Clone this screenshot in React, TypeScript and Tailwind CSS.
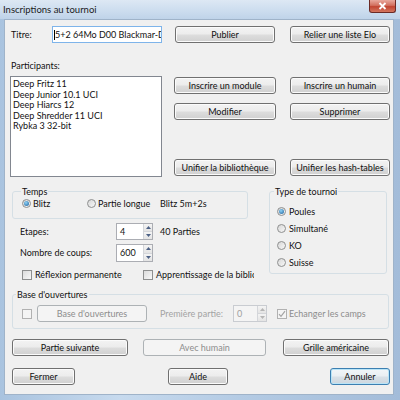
import React from "react";

const btnBase =
  "flex items-center justify-center h-[17px] rounded-[3px] border text-[9px] leading-none whitespace-nowrap shrink-0";
const btnNormal =
  "border-[#707070] text-[#111] bg-[linear-gradient(#f3f3f3_0%,#ececec_48%,#dddddd_52%,#d0d0d0_100%)] shadow-[inset_0_0_0_1px_#fbfbfb]";
const btnDisabled = "border-[#adb2b5] text-[#8d8d8d] bg-[#f4f4f4]";
const btnDefault =
  "border-[#3c7fb1] text-[#111] bg-[linear-gradient(#f2f6f9_0%,#e9eef2_48%,#d9e1e8_52%,#cdd6de_100%)] shadow-[inset_0_0_0_1px_#b9e4f7]";

function Btn({
  children,
  className = "",
  disabled = false,
  primary = false,
}: {
  children: React.ReactNode;
  className?: string;
  disabled?: boolean;
  primary?: boolean;
}) {
  const v = disabled ? btnDisabled : primary ? btnDefault : btnNormal;
  return <div className={`${btnBase} ${v} ${className}`}>{children}</div>;
}

function Radio({ checked = false }: { checked?: boolean }) {
  return (
    <span className="flex items-center justify-center w-[9px] h-[9px] rounded-full border border-[#8e8f8f] bg-[linear-gradient(135deg,#d7d7d7,#f7f7f7)] shrink-0">
      {checked && (
        <span className="w-[5px] h-[5px] rounded-full bg-[radial-gradient(circle_at_40%_35%,#8fd3f7,#1a5d9a)]" />
      )}
    </span>
  );
}

function Check({ checked = false, disabled = false }: { checked?: boolean; disabled?: boolean }) {
  return (
    <span
      className={`flex items-center justify-center w-[10px] h-[10px] border shrink-0 ${
        disabled
          ? "border-[#b1b1b1] bg-[#f4f4f4]"
          : "border-[#8e8f8f] bg-[linear-gradient(135deg,#dcdcdc,#f8f8f8)]"
      }`}
    >
      {checked && (
        <svg width="8" height="8" viewBox="0 0 8 8">
          <path d="M1 4.2 L3 6.3 L7 1.2" fill="none" stroke={disabled ? "#a3a3a3" : "#333"} strokeWidth="1.2" />
        </svg>
      )}
    </span>
  );
}

function Spin({
  value,
  className = "",
  disabled = false,
}: {
  value: string;
  className?: string;
  disabled?: boolean;
}) {
  const arrow = disabled ? "#b5b5b5" : "#4d6185";
  return (
    <div
      className={`flex shrink-0 border ${disabled ? "border-[#c9ccd1] bg-[#f4f4f4] text-[#a0a0a0]" : "border-[#abadb3] bg-white text-[#111]"} ${className}`}
    >
      <div className="flex-1 flex items-center pl-[3px] text-[9px]">{value}</div>
      <div className="flex flex-col w-[9px] border-l border-[#d4d6da]">
        <div className="flex-1 flex items-center justify-center bg-[linear-gradient(#f4f4f4,#e4e4e4)] border-b border-[#d4d6da]">
          <svg width="5" height="3" viewBox="0 0 5 3">
            <path d="M0 3 L2.5 0 L5 3Z" fill={arrow} />
          </svg>
        </div>
        <div className="flex-1 flex items-center justify-center bg-[linear-gradient(#f4f4f4,#e4e4e4)]">
          <svg width="5" height="3" viewBox="0 0 5 3">
            <path d="M0 0 L2.5 3 L5 0Z" fill={arrow} />
          </svg>
        </div>
      </div>
    </div>
  );
}

const participants = [
  "Deep Fritz 11",
  "Deep Junior 10.1 UCI",
  "Deep Hiarcs 12",
  "Deep Shredder 11 UCI",
  "Rybka 3 32-bit",
];

export default function App() {
  return (
    <div className="w-[400px] h-[400px] flex flex-col overflow-hidden bg-[linear-gradient(90deg,#a9c3df_0%,#c7daee_30%,#b4cbe4_60%,#a3bcd9_100%)] font-['Lato','Noto_Sans',sans-serif] text-[9px] text-[#111]">
      {/* barre de titre */}
      <div className="h-[19px] flex items-start shrink-0 bg-[linear-gradient(180deg,#dde8f4_0%,#cbdcee_60%,#bfd3e9_100%)]">
        <span className="ml-[3px] mt-[4px] text-[9.5px] leading-[11px] text-[#1b1b1b]">
          Inscriptions au tournoi
        </span>
        <div className="ml-auto mr-[4px] w-[27px] h-[13px] rounded-b-[3px] border border-t-0 border-[#6b2a25] bg-[linear-gradient(#e9a99d_0%,#d2705f_45%,#c24532_55%,#d3765f_100%)] flex items-center justify-center">
          <svg width="9" height="8" viewBox="0 0 9 8">
            <path d="M1.5 1 L7.5 7 M7.5 1 L1.5 7" stroke="#fff" strokeWidth="1.8" />
          </svg>
        </div>
      </div>

      {/* contenu */}
      <div className="ml-[4px] mr-[6px] mb-[5px] flex-1 bg-[#f0f0f0] border border-[#9fb3c9] flex flex-col">
        {/* titre */}
        <div className="mt-[6px] flex items-center h-[17px]">
          <span className="ml-[6px] w-[41px] shrink-0">Titre:</span>
          <div className="w-[110px] h-[17px] shrink-0 border border-[#7eb4ea] bg-white flex items-center overflow-hidden">
            <span className="w-px h-[10px] bg-black ml-[1px] shrink-0" />
            <span className="whitespace-nowrap">5+2 64Mo D00 Blackmar-Die</span>
          </div>
          <Btn className="ml-[13px] w-[100px]">Publier</Btn>
          <Btn className="ml-[15px] w-[100px]">Relier une liste Elo</Btn>
        </div>

        <div className="mt-[17px] ml-[6px] leading-[11px]">Participants:</div>

        {/* liste + boutons */}
        <div className="mt-[5px] flex">
          <div className="ml-[5px] w-[152px] h-[101px] shrink-0 border border-[#828790] bg-white pl-[2px] pt-[2px] leading-[10.5px]">
            {participants.map((p) => (
              <div key={p}>{p}</div>
            ))}
          </div>
          <div className="ml-[12px] pt-[1px] flex flex-col">
            <div className="flex gap-[14px]">
              <Btn className="w-[102px]">Inscrire un module</Btn>
              <Btn className="w-[100px]">Inscrire un humain</Btn>
            </div>
            <div className="mt-[9px] flex gap-[14px]">
              <Btn className="w-[102px]">Modifier</Btn>
              <Btn className="w-[100px]">Supprimer</Btn>
            </div>
            <div className="mt-[39px] flex gap-[14px]">
              <Btn className="w-[102px]">Unifier la bibliothèque</Btn>
              <Btn className="w-[100px]">Unifier les hash-tables</Btn>
            </div>
          </div>
        </div>

        {/* temps + type */}
        <div className="mt-[9px] flex">
          <div className="ml-[7px] w-[242px] shrink-0 overflow-hidden flex flex-col">
            <fieldset className="w-[236px] border border-[#d5dfe5] rounded-[3px] pl-[9px] pt-[1px] pb-[9px]">
              <legend className="-ml-[1px] px-[1px] leading-[11px]">Temps</legend>
              <div className="flex items-center h-[11px]">
                <Radio checked />
                <span className="ml-[2px] w-[54px] shrink-0">Blitz</span>
                <Radio />
                <span className="ml-[2px] w-[62px] shrink-0">Partie longue</span>
                <span className="whitespace-nowrap">Blitz 5m+2s</span>
              </div>
            </fieldset>
            <div className="mt-[4px] flex items-center h-[17px]">
              <span className="ml-[8px] w-[96px] shrink-0">Etapes:</span>
              <Spin value="4" className="w-[37px] h-[17px]" />
              <span className="ml-[7px] whitespace-nowrap">40 Parties</span>
            </div>
            <div className="mt-[4px] flex items-center h-[18px]">
              <span className="ml-[8px] w-[96px] shrink-0">Nombre de coups:</span>
              <Spin value="600" className="w-[37px] h-[18px]" />
            </div>
            <div className="mt-[7px] flex items-center h-[11px] whitespace-nowrap">
              <span className="ml-[10px] shrink-0">
                <Check />
              </span>
              <span className="ml-[3px] w-[108px] shrink-0">Réflexion permanente</span>
              <Check />
              <span className="ml-[3px] shrink-0">Apprentissage de la bibliothèque</span>
            </div>
          </div>
          <fieldset className="ml-[15px] w-[118px] h-fit shrink-0 border border-[#d5dfe5] rounded-[3px] pl-[7px] pt-[9px] pb-[5px] flex flex-col gap-[6px]">
            <legend className="-ml-[3px] px-[1px] leading-[11px]">Type de tournoi</legend>
            <div className="flex items-center h-[11px]">
              <Radio checked />
              <span className="ml-[3px]">Poules</span>
            </div>
            <div className="flex items-center h-[11px]">
              <Radio />
              <span className="ml-[3px]">Simultané</span>
            </div>
            <div className="flex items-center h-[11px]">
              <Radio />
              <span className="ml-[3px]">KO</span>
            </div>
            <div className="flex items-center h-[11px]">
              <Radio />
              <span className="ml-[3px]">Suisse</span>
            </div>
          </fieldset>
        </div>

        {/* base d'ouvertures */}
        <fieldset className="mt-[9px] ml-[7px] w-[377px] border border-[#d5dfe5] rounded-[3px] pl-[9px] pt-[5px] pb-[6px]">
          <legend className="-ml-[6px] px-[1px] leading-[11px]">Base d'ouvertures</legend>
          <div className="flex items-center h-[17px]">
            <Check disabled />
            <Btn disabled className="ml-[5px] w-[110px] text-[#7a7a7a]">
              Base d'ouvertures
            </Btn>
            <span className="ml-[13px] w-[73px] shrink-0 text-[#a3a3a3]">Première partie:</span>
            <Spin value="0" disabled className="w-[34px] h-[17px]" />
            <span className="ml-[10px] shrink-0">
              <Check checked disabled />
            </span>
            <span className="ml-[2px] text-[#8d8d8d] whitespace-nowrap">Echanger les camps</span>
          </div>
        </fieldset>

        {/* boutons du bas */}
        <div className="mt-[10px] flex">
          <Btn className="ml-[7px] w-[116px]">Partie suivante</Btn>
          <Btn disabled className="ml-[15px] w-[123px]">
            Avec humain
          </Btn>
          <Btn className="ml-[17px] w-[106px]">Grille américaine</Btn>
        </div>
        <div className="mt-[12px] flex">
          <Btn className="ml-[7px] w-[63px]">Fermer</Btn>
          <Btn className="ml-[93px] w-[60px]">Aide</Btn>
          <Btn primary className="ml-[102px] w-[60px]">
            Annuler
          </Btn>
        </div>
      </div>
    </div>
  );
}
